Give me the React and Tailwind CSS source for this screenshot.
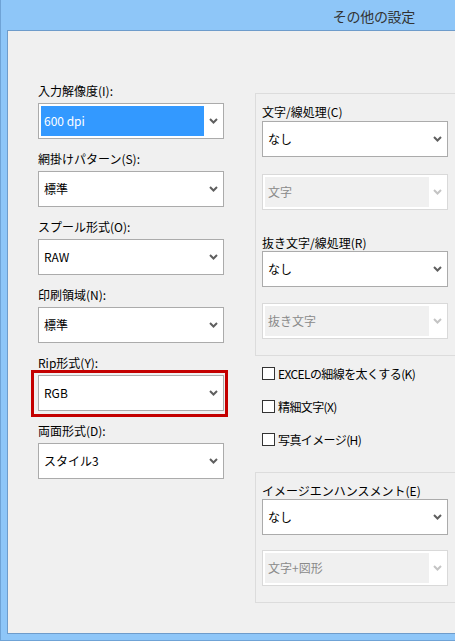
import React from 'react';

const font = { fontFamily: '"Noto Sans CJK JP", "Noto Sans", sans-serif' };

function Chevron({ disabled }) {
  return (
    <svg width="9" height="6" viewBox="0 0 9 6" className="shrink-0">
      <polyline
        points="1,1 4.5,4.5 8,1"
        fill="none"
        stroke={disabled ? '#c4c4c4' : '#5f5f5f'}
        strokeWidth="2"
      />
    </svg>
  );
}

function Select({ value, selected, disabled }) {
  if (disabled) {
    return (
      <div className="h-[36px] w-[186px] border border-[#d9d9d9] bg-white flex items-stretch">
        <div className="m-[2px] mr-0 flex-1 bg-[#f0f0f0] flex items-center pl-[3px] text-[12px] text-[#8a8a8a]">
          {value}
        </div>
        <div className="w-[18px] flex items-center justify-center pr-[1px]">
          <Chevron disabled />
        </div>
      </div>
    );
  }
  return (
    <div className="h-[36px] w-[186px] border border-[#ababab] bg-white flex items-stretch">
      <div
        className={
          selected
            ? 'm-[2px] mr-0 flex-1 bg-[#3399ff] flex items-center pl-[3px] text-[12px] text-white'
            : 'm-[2px] mr-0 flex-1 flex items-center pl-[3px] text-[12px] text-black'
        }
      >
        {value}
      </div>
      <div className="w-[19px] flex items-center justify-center pr-[1px]">
        <Chevron />
      </div>
    </div>
  );
}

function Field({ label, value, selected, highlight }) {
  return (
    <div className="flex flex-col">
      <div className="h-[16px] leading-[16px] text-[12px] text-black whitespace-nowrap">{label}</div>
      <div className="relative mt-[4px]">
        <Select value={value} selected={selected} />
        {highlight && (
          <div className="absolute left-[-7px] top-[-5px] w-[197px] h-[47px] border-[3px] border-[#c40000] pointer-events-none" />
        )}
      </div>
    </div>
  );
}

function Check({ label }) {
  return (
    <div className="flex items-center h-[13px] gap-[3px] whitespace-nowrap">
      <div className="w-[13px] h-[13px] border border-[#333333] bg-white shrink-0" />
      <span className="text-[12px] leading-[13px] text-black tracking-[-0.6px]">{label}</span>
    </div>
  );
}

export default function App() {
  return (
    <div
      className="w-[455px] h-[641px] bg-[#8ec6f8] border-l border-b border-[#6fa3d6] overflow-hidden flex flex-col"
      style={font}
    >
      <div className="h-[30px] shrink-0 flex items-center justify-end pr-[40px]">
        <span className="text-[14px] text-[#333333] leading-[20px] mt-[2px] tracking-[-0.3px]">その他の設定</span>
      </div>

      <div className="ml-[6px] h-[604px] shrink-0 border-l border-t border-b border-[#6e9ccb] bg-[#f0f0f0] flex">
        {/* left column */}
        <div className="pl-[30px] pt-[52px] w-[216px] shrink-0 flex flex-col gap-[12px]">
          <Field label="入力解像度(I):" value="600 dpi" selected />
          <Field label="網掛けパターン(S):" value="標準" />
          <Field label="スプール形式(O):" value="RAW" />
          <Field label="印刷領域(N):" value="標準" />
          <Field label="Rip形式(Y):" value="RGB" highlight />
          <Field label="両面形式(D):" value="スタイル3" />
        </div>

        {/* right column */}
        <div className="ml-[31px] pt-[62px] flex flex-col">
          <div className="w-[230px] h-[263px] border border-[#dcdcdc] pl-[6px] pt-[10px] flex flex-col">
            <div className="h-[16px] leading-[16px] text-[12px] text-black">文字/線処理(C)</div>
            <div className="mt-[1px]">
              <Select value="なし" />
            </div>
            <div className="mt-[17px]">
              <Select value="文字" disabled />
            </div>
            <div className="mt-[25px] h-[16px] leading-[16px] text-[12px] text-black">抜き文字/線処理(R)</div>
            <div className="mt-0">
              <Select value="なし" />
            </div>
            <div className="mt-[16px]">
              <Select value="抜き文字" disabled />
            </div>
          </div>

          <div className="pl-[7px] mt-[11px] flex flex-col gap-[20px]">
            <Check label="EXCELの細線を太くする(K)" />
            <Check label="精細文字(X)" />
            <Check label="写真イメージ(H)" />
          </div>

          <div className="mt-[26px] w-[230px] h-[131px] border border-[#dcdcdc] pl-[6px] pt-[10px] flex flex-col">
            <div className="h-[16px] leading-[16px] text-[12px] text-black whitespace-nowrap">イメージエンハンスメント(E)</div>
            <div className="mt-0">
              <Select value="なし" />
            </div>
            <div className="mt-[15px]">
              <Select value="文字+図形" disabled />
            </div>
          </div>
        </div>
      </div>
    </div>
  );
}
